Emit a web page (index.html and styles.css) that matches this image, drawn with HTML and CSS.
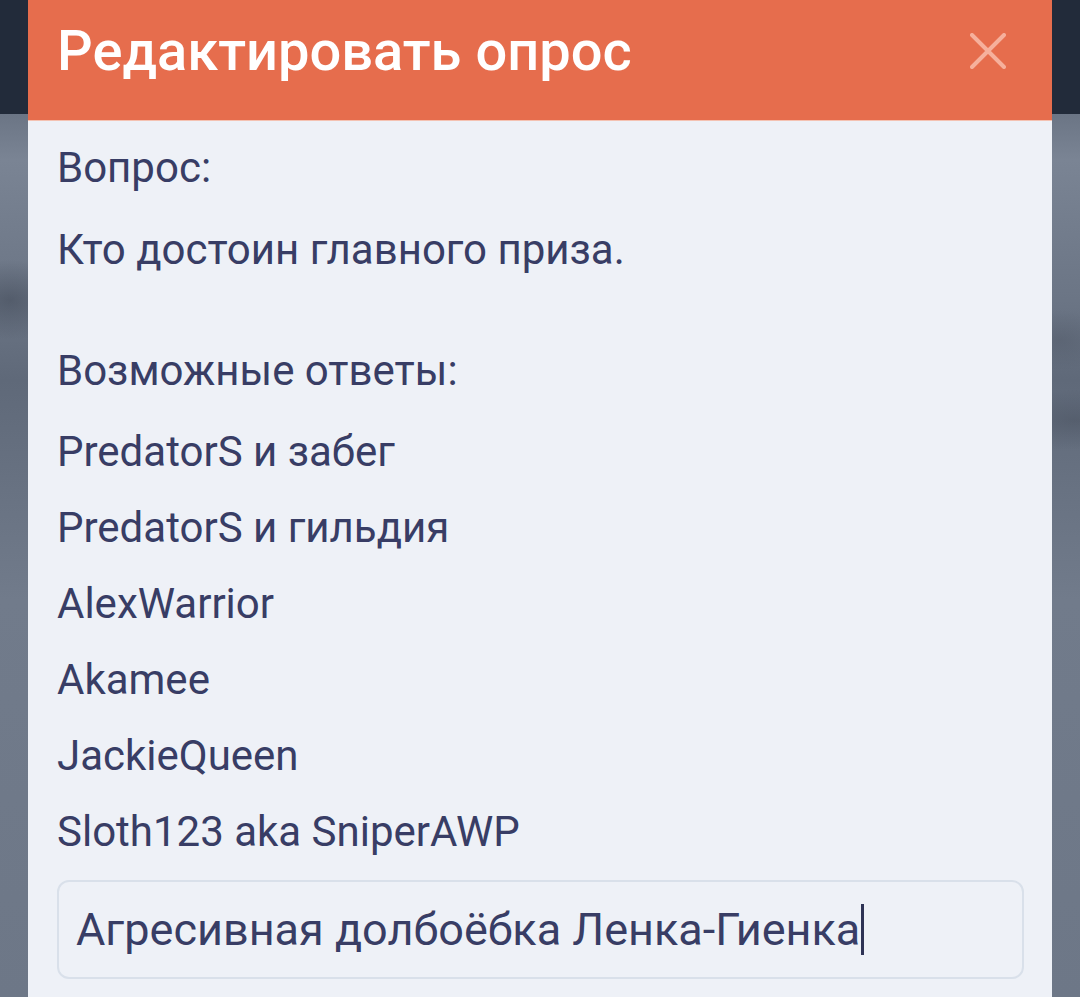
FILE: index.html
```html
<!DOCTYPE html>
<html lang="ru">
<head>
<meta charset="utf-8">
<title>Редактировать опрос</title>
<link rel="stylesheet" href="styles.css">
</head>
<body>
<div class="modal">
  <div class="modal-header">
    <h1 class="modal-title">Редактировать опрос</h1>
    <button class="close-btn" aria-label="Закрыть">
      <svg viewBox="0 0 36 36" width="36" height="36"><path d="M2 2 L34 34 M34 2 L2 34" stroke="currentColor" stroke-width="4" stroke-linecap="round"/></svg>
    </button>
  </div>
  <div class="modal-body">
    <div class="label first">Вопрос:</div>
    <div class="question">Кто достоин главного приза.</div>
    <div class="label answers-label">Возможные ответы:</div>
    <ul class="answers">
      <li>PredatorS и забег</li>
      <li>PredatorS и гильдия</li>
      <li>AlexWarrior</li>
      <li>Akamee</li>
      <li>JackieQueen</li>
      <li>Sloth123 aka SniperAWP</li>
    </ul>
    <div class="field">Агресивная долбоёбка Ленка-Гиенка<span class="caret"></span></div>
  </div>
</div>
</body>
</html>
```
FILE: styles.css
```css
html, body {
  margin: 0;
  padding: 0;
  height: 100%;
  overflow: hidden;
}
body {
  font-family: Roboto, "Noto Sans", "Liberation Sans", sans-serif;
  background:
    linear-gradient(#222b3a 0, #222b3a 114px, transparent 114px),
    radial-gradient(ellipse 60px 40px at 10px 300px, rgba(60,68,82,0.5), transparent),
    radial-gradient(ellipse 80px 30px at 1075px 420px, rgba(70,78,92,0.45), transparent),
    radial-gradient(ellipse 50px 30px at 1060px 340px, rgba(75,83,97,0.35), transparent),
    linear-gradient(180deg, #6b7585 114px, #7a8494 160px, #6b7585 300px, #5f6979 380px, #717b8b 600px, #6d7787 997px);
  min-height: 997px;
}
.modal {
  margin: 0 28px;
  background: #eef1f7;
  min-height: 997px;
}
.modal-header {
  height: 120px;
  box-sizing: border-box;
  background: #e66d4d;
  display: flex;
  justify-content: space-between;
  align-items: flex-start;
  padding: 23px 46px 0 29px;
  box-shadow: 0 1px 0 #f4c2b2;
}
.modal-title {
  margin: 0;
  font-size: 56px;
  line-height: 56px;
  font-weight: 500;
  color: #ffffff;
}
.close-btn {
  margin-top: 10px;
  padding: 0;
  border: 0;
  background: none;
  color: #f6b09c;
  width: 36px;
  height: 36px;
  display: block;
}
.close-btn svg { display: block; }
.modal-body {
  padding: 10px 28px 0 29px;
  color: #383d65;
  font-size: 42px;
}
.label, .question, .answers li {
  line-height: 76px;
  height: 76px;
}
.question { margin-top: 6px; }
.answers-label { margin-top: 45px; }
.answers {
  list-style: none;
  margin: 5px 0 0 0;
  padding: 0;
}
.field {
  margin-top: 10px;
  height: 99px;
  box-sizing: border-box;
  border: 2px solid #d9e0ea;
  border-radius: 12px;
  padding: 0 0 0 17px;
  display: flex;
  align-items: center;
  color: #383d65;
  font-size: 45px;
}
.caret {
  display: block;
  width: 3px;
  height: 51px;
  background: #2e3355;
  margin-left: 1px;
}
```
